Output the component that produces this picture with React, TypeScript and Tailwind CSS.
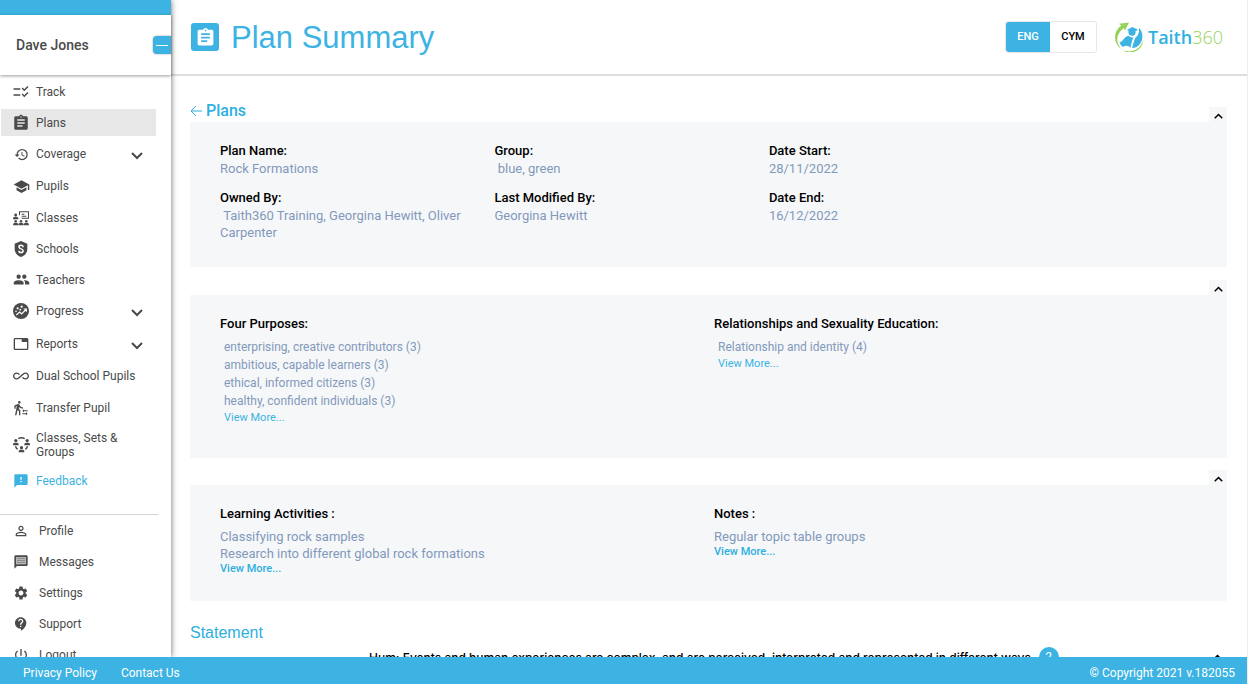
import type { ReactNode } from "react";
import {
  MdAllInclusive,
  MdAssignment,
  MdChecklistRtl,
  MdContactSupport,
  MdFeedback,
  MdHistory,
  MdPeople,
  MdPersonOutline,
  MdPowerSettingsNew,
  MdSchool,
  MdSettings,
  MdTab,
  MdTransferWithinAStation,
} from "react-icons/md";

function ClassesIcon() {
  return (
    <svg viewBox="0 0 24 24" className="size-4" fill="currentColor">
      <path d="M9 2h15v11H13v-1.500h9.500V3.500h-12V8H9z" />
      <path d="M13 5.500h4V7h-4zM13 8.500h7V10h-7z" />
      <circle cx="4" cy="7.500" r="2.200" />
      <path d="M0 14v-1.500C0 11 2 10.200 4 10.200s4 .8 4 2.300V14z" />
      <circle cx="4" cy="17" r="1.900" />
      <circle cx="12" cy="17" r="1.900" />
      <circle cx="20" cy="17" r="1.900" />
      <path d="M.2 23v-1.500c0-1.300 1.800-2.200 3.800-2.200s3.800.9 3.800 2.200V23zM8.200 23v-1.500c0-1.300 1.800-2.200 3.800-2.200s3.800.9 3.800 2.200V23zM16.200 23v-1.500c0-1.300 1.800-2.200 3.800-2.200s3.800.9 3.800 2.200V23z" />
    </svg>
  );
}

function ShieldIcon() {
  return (
    <svg viewBox="0 0 24 24" className="size-4">
      <path fill="currentColor" d="M12 0 2.500 4v8c0 5.500 4 10.500 9.500 12 5.500-1.500 9.500-6.500 9.500-12V4z" />
      <path fill="none" stroke="#fff" strokeWidth="2.200" d="M15.200 9.200c0-1.700-1.300-2.700-3.200-2.700S9 7.500 9 9c0 3.500 6.200 2 6.200 5.500 0 1.700-1.300 2.700-3.200 2.700s-3.200-1-3.200-2.700" />
    </svg>
  );
}

function ProgressIcon() {
  return (
    <svg viewBox="0 0 24 24" className="size-4">
      <circle cx="12" cy="12" r="12" fill="currentColor" />
      <g fill="#fff">
        <circle cx="7" cy="8" r="1.700" />
        <circle cx="13" cy="5.500" r="1.700" />
        <circle cx="11" cy="10" r="1.300" />
        <circle cx="4.500" cy="12.500" r="1.200" />
      </g>
      <path d="m5 18 5-4.500 3 3 6.500-7M16 9h4v4" fill="none" stroke="#fff" strokeWidth="1.800" />
    </svg>
  );
}

function GroupsIcon() {
  return (
    <svg viewBox="0 0 24 24" className="size-[17px]" fill="currentColor">
      <circle cx="4" cy="6.500" r="2.300" />
      <circle cx="20" cy="6.500" r="2.300" />
      <circle cx="12" cy="16.500" r="2.300" />
      <path d="M0 13v-1.500C0 10 2 9.500 4 9.500s4 .5 4 2V13zM16 13v-1.500c0-1.500 2-2 4-2s4 .5 4 2V13zM8 23v-1.500c0-1.500 2-2 4-2s4 .5 4 2V23z" />
      <path fill="none" stroke="currentColor" strokeWidth="2" d="M7.500 3.800a9 9 0 0 1 9 0M3.500 14.500c.6 2 1.600 3.300 3 4.300M20.500 14.500c-.6 2-1.600 3.300-3 4.300" />
    </svg>
  );
}

function MessageIcon() {
  return (
    <svg viewBox="0 0 24 24" className="size-4" fill="currentColor">
      <path opacity=".4" d="M4 4h16v12H4z" />
      <path d="M20 2H4c-1.100 0-2 .9-2 2v18l4-4h14c1.100 0 2-.9 2-2V4c0-1.100-.9-2-2-2zm-.5 13.500H5L4.500 16V4.500h15z" />
      <path d="M6 12h12v1.500H6zM6 9h12v1.500H6zM6 6h12v1.500H6z" opacity=".4" />
    </svg>
  );
}

function Chevron({ up = false }: { up?: boolean }) {
  return (
    <svg viewBox="0 0 12 8" className={up ? "h-[6px] w-[9px]" : "h-2 w-3"} fill="none" stroke="currentColor" strokeWidth="2">
      <path d={up ? "m1 7 5-5 5 5" : "m1 1 5 5 5-5"} />
    </svg>
  );
}

function Logo() {
  return (
    <a href="#home" aria-label="Taith360" className="flex items-center gap-1 font-['Open_Sans',sans-serif] text-lg leading-6">
      <svg viewBox="0 0 30 30" className="size-[30px]">
        <path fill="#95d25a" d="M15 .5 5 1.800l2.300 1.600A14.200 14.200 0 1 0 29.300 17 13 13 0 1 1 9.800 6.200L11 8.500z" />
        <path fill="#3cb3e2" d="M18.500 5 13 7.800l1.500.9v2.500c.8 3.300 6 3.300 7 .2V9.200L24 7.800z" />
        <path fill="#3cb3e2" d="M25 5.800c4 4.300 4.700 11 1.300 15.700-2.100 3-5 4.500-8.300 4.600l2-6.600c.6-2 .8-3.200 2.400-4.700 2-1.900 3-4.600 2.600-9zM5.500 20.500c3.500-.5 4.800-6.200 9-6.700 1.800 1.500 3.200 1.800 5 1.500-1.500 2.800-2.200 6.900-3 10.800-1.500-2.500-5-3-7.800-1-1.400-1.300-2.500-2.800-3.200-4.600z" />
      </svg>
      <span>
        <span className="font-semibold text-[#2fb0e3]">Taith</span>
        <span className="font-light text-[#95d25a]">360</span>
      </span>
    </a>
  );
}

type NavItem = { label: string; icon: ReactNode; row: string; expandable?: boolean; active?: boolean; accent?: boolean };

const mainNav: NavItem[] = [
  { label: "Track", icon: <MdChecklistRtl size={18} />, row: "h-[31px]" },
  { label: "Plans", icon: <MdAssignment size={18} />, row: "my-0.5 h-[27px]", active: true },
  { label: "Coverage", icon: <MdHistory size={15} />, row: "h-8", expandable: true },
  { label: "Pupils", icon: <MdSchool size={17} />, row: "h-8" },
  { label: "Classes", icon: <ClassesIcon />, row: "h-[31px]" },
  { label: "Schools", icon: <ShieldIcon />, row: "h-[31px]" },
  { label: "Teachers", icon: <MdPeople size={17} />, row: "h-[31px]" },
  { label: "Progress", icon: <ProgressIcon />, row: "h-8", expandable: true },
  { label: "Reports", icon: <MdTab size={16} />, row: "h-[33px]", expandable: true },
  { label: "Dual School Pupils", icon: <MdAllInclusive size={16} />, row: "h-8" },
  { label: "Transfer Pupil", icon: <MdTransferWithinAStation size={16} />, row: "h-[31px]" },
  { label: "Classes, Sets & Groups", icon: <GroupsIcon />, row: "h-[43px]" },
  { label: "Feedback", icon: <MdFeedback size={16} />, row: "h-[30px]", accent: true },
];

const userNav = [
  { label: "Profile", icon: <MdPersonOutline size={16} /> },
  { label: "Messages", icon: <MessageIcon /> },
  { label: "Settings", icon: <MdSettings size={16} /> },
  { label: "Support", icon: <MdContactSupport size={16} /> },
  { label: "Logout", icon: <MdPowerSettingsNew size={16} /> },
];

function Sidebar() {
  return (
    <aside className="z-10 flex w-[171px] shrink-0 flex-col border-t-[15px] border-[#3cb3e2] bg-white text-[#4a4a4a] shadow-[0_0_6px_rgba(0,0,0,0.6)]">
      <div className="flex h-[60px] shrink-0 items-center justify-between pl-4 shadow-[0_1px_3px_rgba(0,0,0,0.4)]">
        <span className="text-sm font-medium">Dave Jones</span>
        <button type="button" aria-label="Collapse menu" className="flex h-[18px] w-[18px] items-center justify-center rounded-l bg-[#3cb3e2] shadow-[0_0_2px_rgba(0,0,0,0.4)]">
          <span className="h-px w-3 bg-white" />
        </button>
      </div>
      <nav aria-label="Main" className="mt-px pr-[15px] pl-px text-xs leading-[14px]">
        {mainNav.map((item) => (
          <a
            key={item.label}
            href={`#${item.label}`}
            className={`flex items-center pr-[13px] ${item.row} ${item.active ? "bg-[#e7e7e7]" : ""} ${item.accent ? "text-[#3cb3e2]" : ""}`}
          >
            <span className="ml-[10px] flex w-5 shrink-0 justify-center">{item.icon}</span>
            <span className="ml-[5px] flex-1">{item.label}</span>
            {item.expandable && (
              <span className="pt-1">
                <Chevron />
              </span>
            )}
          </a>
        ))}
      </nav>
      <hr className="mt-[18px] mr-[13px] shrink-0 border-[#d4d4d4]" />
      <nav aria-label="Account" className="text-xs">
        {userNav.map((item) => (
          <a key={item.label} href={`#${item.label}`} className="flex h-[31px] items-center">
            <span className="ml-[11px] flex w-5 justify-center">{item.icon}</span>
            <span className="ml-2">{item.label}</span>
          </a>
        ))}
      </nav>
    </aside>
  );
}

function CollapseButton() {
  return (
    <button type="button" aria-label="Collapse section" className="flex h-[15px] w-[18px] items-center justify-center bg-[#f6f7f9] pt-0.5 text-black">
      <Chevron up />
    </button>
  );
}

function Field({ label, children }: { label: string; children: ReactNode }) {
  return (
    <div>
      <dt className="leading-[19px] font-medium text-black">{label}</dt>
      <dd className="leading-[17px] whitespace-pre-wrap">{children}</dd>
    </div>
  );
}

const purposes = [
  "enterprising, creative contributors (3)",
  "ambitious, capable learners (3)",
  "ethical, informed citizens (3)",
  "healthy, confident individuals (3)",
];

export default function App() {
  return (
    <div className="flex h-screen flex-col overflow-hidden border-r border-[#ececec] bg-white font-[Roboto,sans-serif] text-[13px]">
      <div className="flex min-h-0 flex-1">
        <Sidebar />
        <div className="flex min-w-0 flex-1 flex-col overflow-hidden">
          <header className="flex h-[76px] shrink-0 items-center border-b-2 border-[#dedede] pr-6 pl-5">
            <span className="flex size-7 items-center justify-center rounded-[3px] bg-[#3cb3e2] text-white">
              <MdAssignment size={21} />
            </span>
            <h1 className="ml-3 flex-1 pt-0.5 font-['Liberation_Sans',Arial,sans-serif] text-[31px] leading-9 text-[#3cb3e2]">Plan Summary</h1>
            <div className="mr-[17px] flex h-8 rounded-[3px] border border-[#e6e6e6] text-[11px] font-medium">
              <button type="button" aria-pressed="true" className="w-11 rounded-l-[3px] bg-[#3cb3e2] text-white">ENG</button>
              <button type="button" aria-pressed="false" className="w-[46px] text-black">CYM</button>
            </div>
            <Logo />
          </header>

          <main className="flex-1 overflow-hidden pt-[26px] pr-5 pl-[19px] text-[#8299bb]">
            <div className="flex justify-between">
              <a href="#plans" className="flex h-[17px] items-center gap-1 text-base font-medium text-[#2dafe0]">
                <svg viewBox="0 0 12 12" className="size-3" fill="none" stroke="currentColor">
                  <path d="M12 6H1m5-5L1 6l5 5" />
                </svg>
                Plans
              </a>
              <div className="pt-[5px]">
                <CollapseButton />
              </div>
            </div>
            <dl className="grid grid-cols-[5fr_5fr_8fr] gap-y-[11px] bg-[#f6f7f9] pt-[19px] pr-[19px] pb-[26px] pl-[30px]">
              <Field label="Plan Name:">Rock Formations</Field>
              <Field label="Group:">{" blue, green"}</Field>
              <Field label="Date Start:">28/11/2022</Field>
              <Field label="Owned By:">{" Taith360 Training, Georgina Hewitt, Oliver Carpenter"}</Field>
              <Field label="Last Modified By:">Georgina Hewitt</Field>
              <Field label="Date End:">16/12/2022</Field>
            </dl>

            <div className="mt-[13px] flex justify-end">
              <CollapseButton />
            </div>
            <section className="grid grid-cols-2 bg-[#f6f7f9] pt-[19px] pr-[19px] pb-[33px] pl-[30px]">
              <div>
                <h2 className="leading-[19px] font-medium text-black">Four Purposes:</h2>
                <ul className="mt-[5px] pl-1 text-xs leading-[18px]">
                  {purposes.map((purpose) => (
                    <li key={purpose}>{purpose}</li>
                  ))}
                </ul>
                <a href="#purposes" className="block pl-1 text-[11px] leading-[15px] text-[#3cb3e2]">View More...</a>
              </div>
              <div>
                <h2 className="leading-[19px] font-medium text-black">Relationships and Sexuality Education:</h2>
                <p className="mt-[5px] pl-1 text-xs leading-[18px]">Relationship and identity (4)</p>
                <a href="#rse" className="block pl-1 text-[11px] leading-[15px] text-[#3cb3e2]">View More...</a>
              </div>
            </section>

            <div className="mt-3 flex justify-end">
              <CollapseButton />
            </div>
            <section className="grid grid-cols-2 bg-[#f6f7f9] pt-[19px] pr-[19px] pb-[26px] pl-[30px]">
              <div>
                <h2 className="leading-[19px] font-medium text-black">Learning Activities :</h2>
                <p className="mt-[5px] leading-[17px]">Classifying rock samples</p>
                <p className="leading-[17px]">Research into different global rock formations</p>
                <a href="#activities" className="block text-[11px] leading-[13px] font-medium text-[#2dafe0]">View More...</a>
              </div>
              <div>
                <h2 className="leading-[19px] font-medium text-black">Notes :</h2>
                <p className="mt-[5px] leading-[17px]">Regular topic table groups</p>
                <a href="#notes" className="block text-[11px] leading-[13px] font-medium text-[#2dafe0]">View More...</a>
              </div>
            </section>

            <h2 className="mt-[22px] font-['Liberation_Sans',Arial,sans-serif] text-base leading-5 text-[#2dafe0]">Statement</h2>
            <div className="mt-1 flex h-5 items-center pr-[5px] pl-[179px] text-black">
              <h3 className="pt-0.5 font-[Inter,sans-serif] text-xs font-medium">Hum: Events and human experiences are complex, and are perceived, interpreted and represented in different ways.</h3>
              <span className="mr-auto ml-1 flex size-5 items-center justify-center rounded-full bg-[#3cb3e2] text-xs text-white">2</span>
              <Chevron up />
            </div>
          </main>
        </div>
      </div>
      <footer className="z-20 flex h-[27px] shrink-0 items-center gap-6 bg-[#3cb3e2] pt-1 pr-3 pl-[23px] text-xs text-white">
        <a href="#privacy">Privacy Policy</a>
        <a href="#contact">Contact Us</a>
        <span className="ml-auto">© Copyright 2021 v.182055</span>
      </footer>
    </div>
  );
}
